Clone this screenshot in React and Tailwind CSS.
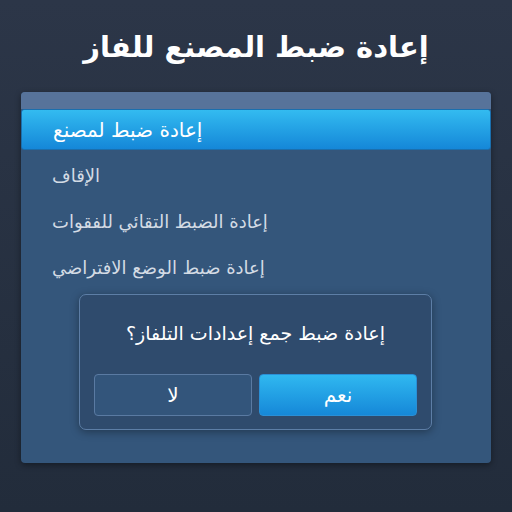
export default function App() {
  const rows = [
    'الإقاف',
    'إعادة الضبط التقائي للفقوات',
    'إعادة ضبط الوضع الافتراضي',
  ];

  return (
    <div className="w-[512px] h-[512px] overflow-hidden bg-gradient-to-b from-[#2c3648] to-[#222c3b] flex flex-col items-center pt-[24px]" style={{ fontFamily: '"DejaVu Sans", sans-serif' }}>
      <h1 dir="rtl" className="text-white text-[29px] font-bold leading-[46px] h-[68px]">إعادة ضبط المصنع للفاز</h1>

      <div className="w-[470px] h-[371px] rounded-[4px] bg-[#34567b] shadow-[0_2px_6px_rgba(0,0,0,0.4)] flex flex-col overflow-hidden">
        <div className="h-[17px] bg-[#57739a]" />
        <div className="h-[41px] bg-gradient-to-b from-[#33bbf0] to-[#1587d8] rounded-[3px] border border-[#1a6fae] flex items-center pl-[31px]">
          <span dir="rtl" className="text-white text-[20px] leading-none">إعادة ضبط لمصنع</span>
        </div>
        <div className="flex flex-col pl-[31px] pt-[14px] gap-[22px]">
          {rows.map(r => (
            <div key={r} className="h-[24px] flex items-center">
              <span dir="rtl" className="text-[#d3dbe4] text-[18px] leading-none">{r}</span>
            </div>
          ))}
        </div>

        <div className="ml-[58px] mt-[14px] w-[353px] h-[136px] rounded-[7px] border border-[#5d7ea6] bg-[#2f4b6d] shadow-[0_2px_8px_rgba(0,0,0,0.35)] flex flex-col items-center">
          <div dir="rtl" className="text-white text-[19px] h-[40px] mt-[18px] flex items-center">إعادة ضبط جمع إعدادات التلفاز؟</div>
          <div className="flex gap-[7px] mt-[21px]">
            <button className="w-[158px] h-[42px] rounded-[4px] border border-[#5a7aa2] bg-[#33557b] text-white text-[20px] flex items-center justify-center">لا</button>
            <button className="w-[158px] h-[42px] rounded-[4px] border border-[#2a8fd6] bg-gradient-to-b from-[#30b8f0] to-[#1688d8] text-white text-[20px] flex items-center justify-center">نعم</button>
          </div>
        </div>
      </div>
    </div>
  );
}
